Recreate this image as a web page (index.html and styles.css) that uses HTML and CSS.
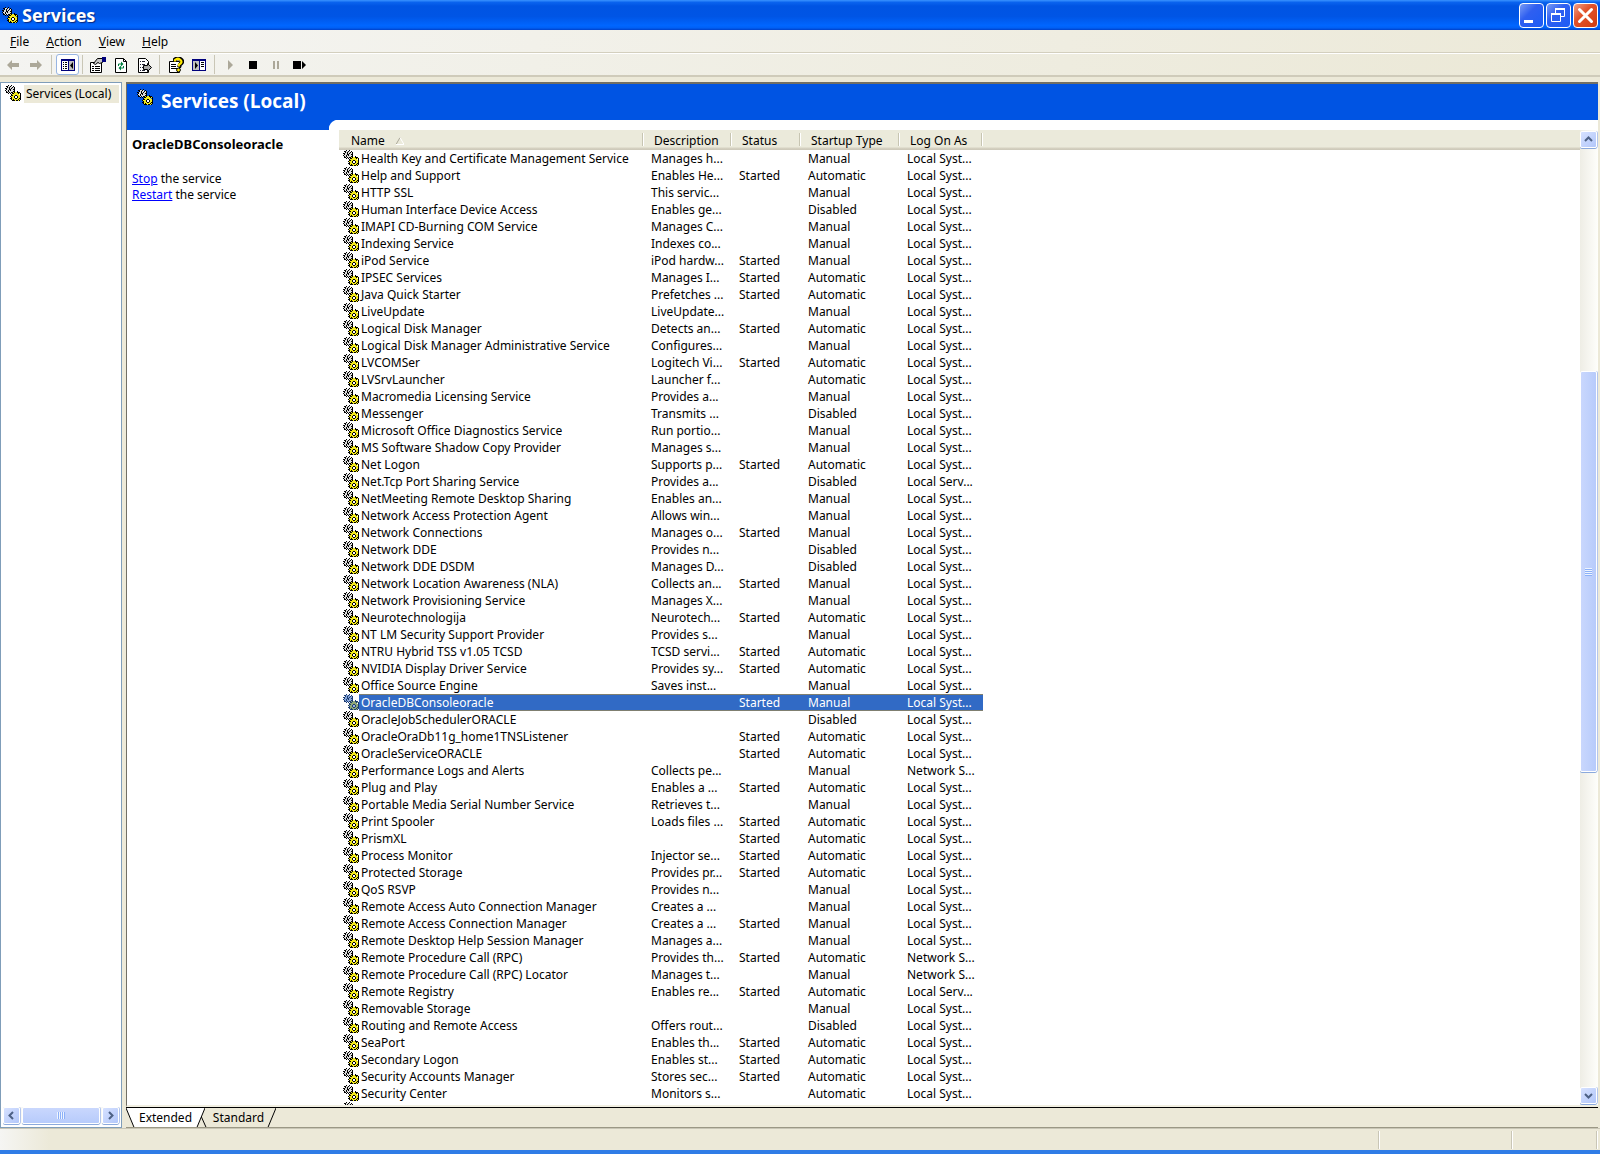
FILE: index.html
```
<!DOCTYPE html>
<html lang="en">
<head>
    <meta charset="UTF-8">
    <meta name="viewport" content="width=device-width, initial-scale=1.0">
    <title>Services</title>
    <link rel="stylesheet" href="styles.css">
</head>
<body>
    <svg class="defs" aria-hidden="true">
        <symbol id="gears" viewBox="0 0 16 16">
            <path class="gear-back" d="M3 1.5h4M2 2.5h8M2 3.5h8M1 4.5h9M1 5.5h9M1 6.5h7M3 7.5h3"/>
            <path class="gear-front" d="M8 7.5h4M7 8.5h9M7 9.5h7M8 10.5h7M6 11.5h9M7 12.5h8M7 13.5h7M7 14.5h8M10 15.5h4"/>
            <path class="gear-hole" d="M10 11.5h2M10 12.5h2"/>
            <path class="gear-line" d="M3 .5h1m2 0h1M1 1.5h2m2 0h1m2 0h1M2 2.5h1m1 0h1m2 0h1m1 0h1M0 3.5h2m2 0h1m1 0h1m2 0h1M1 4.5h1m2 0h2m2 0h2M0 5.5h1m2 0h1m1 0h1m3 0h1M1 6.5h1m1 0h1m4 0h2m2 0h1M1 7.5h2m1 0h1m1 0h2m1 0h1m2 0h3M3 8.5h1m1 0h1m1 0h2m4 0h1m1 0h1M6 9.5h1m8 0h1M6 10.5h2m2 0h2m3 0h1M5 11.5h1m3 0h1m2 0h1m2 0h1M6 12.5h1m2 0h1m2 0h1m2 0h1M5 13.5h2m3 0h2m2 0h2M6 14.5h1m1 0h1m4 0h1m1 0h1M7 15.5h3m1 0h2m1 0h1"/>
        </symbol>
    </svg>

    <header class="titlebar">
        <svg class="icon"><use href="#gears"/></svg>
        <h1>Services</h1>
        <div class="window-buttons">
            <button type="button" aria-label="Minimize">
                <svg viewBox="0 0 21 21"><path d="M3 15h9v3H3z" fill="#fff"/></svg>
            </button>
            <button type="button" aria-label="Restore">
                <svg viewBox="0 0 21 21" fill="none" stroke="#fff"><path d="M7.5 8V4.5h9v7H13"/><path d="M7 4h10" stroke-width="2"/><path d="M3.5 9.500h9v7h-9z"/><path d="M3 9h10" stroke-width="2"/></svg>
            </button>
            <button type="button" class="close" aria-label="Close">
                <svg viewBox="0 0 21 21"><path d="M4.500 4.500l12 12M16.500 4.500l-12 12" stroke="#fff" stroke-width="3" stroke-linecap="round"/></svg>
            </button>
        </div>
    </header>

    <nav class="menubar">
        <a href="#"><u>F</u>ile</a>
        <a href="#"><u>A</u>ction</a>
        <a href="#"><u>V</u>iew</a>
        <a href="#"><u>H</u>elp</a>
    </nav>

    <div class="toolbar">
        <button type="button" aria-label="Back"><svg viewBox="0 0 16 16"><path d="M2 8l5-5v3h7v4H7v3z" fill="#aca899"/></svg></button>
        <button type="button" aria-label="Forward"><svg viewBox="0 0 16 16"><path d="M14 8L9 3v3H2v4h7v3z" fill="#aca899"/></svg></button>
        <span class="divider"></span>
        <button type="button" class="pressed" aria-label="Show/Hide Console Tree"><svg viewBox="0 0 16 16"><path d="M1 2h14v12H1z" fill="#00007b"/><path d="M2 4h6v9H2z" fill="#fff"/><path d="M9 4h5v9H9z" fill="#c0c0c0"/><path d="M3 5.500h1m1 0h2M3 7.500h1m1 0h2M3 9.500h1m1 0h2M3 11.500h1m1 0h2" stroke="#000"/><path d="M13 5v7L10 8.500z"/></svg></button>
        <span class="divider"></span>
        <button type="button" aria-label="Properties"><svg viewBox="0 0 16 16"><path d="M.5 5.500h11v10H.5z" fill="#fff" stroke="#000"/><path d="M2 9.500h2m1 0h5M2 11.500h2m1 0h5M2 13.500h2m1 0h5" stroke="#000"/><path d="M3.500 6.500l4-5h5v4l-3 1-1.500-1-2.500 2z" fill="#c8c8c8" stroke="#000"/><path d="M12 0h4v5h-4z" fill="#00007b"/></svg></button>
        <button type="button" aria-label="Refresh"><svg viewBox="0 0 16 16"><path d="M2.500 1.500h8l3 3v11h-11z" fill="#fff" stroke="#000"/><path d="M10.500 1.500v3h3" fill="none" stroke="#000"/><path d="M8 4.500v5L10.500 7zM8 8.500v5L5.500 11z" fill="#008040"/><path d="M5.500 9V7H8M10.500 9v2H8" fill="none" stroke="#008040"/></svg></button>
        <button type="button" aria-label="Export List"><svg viewBox="0 0 16 16"><path d="M2.500 1.500h7l3 3v11h-10z" fill="#fff" stroke="#000"/><path d="M4 4.500h1m1 0h3M4 7.500h1m1 0h3M4 10.500h1m1 0h3M4 13.500h1m1 0h3" stroke="#223"/><path d="M7.500 8.500h4v-2l4 4-4 4v-2h-4z" fill="#aaa" stroke="#000"/></svg></button>
        <span class="divider"></span>
        <button type="button" aria-label="Help"><svg viewBox="0 0 16 16"><path d="M1.500 4.500h10v11h-10z" fill="#fff" stroke="#000"/><path d="M3 7.500h5M3 9.500h5M3 11.500h6" stroke="#000"/><path d="M7 5V2.500q3-2.500 6 0t-1 5l-1 3" fill="none" stroke="#000" stroke-width="4"/><path d="M7 4.500V3q3-2.500 5.500 0T11 7.500v2" fill="none" stroke="#ffeb00" stroke-width="2.200"/><circle cx="10.500" cy="13" r="1.900" fill="#ffeb00" stroke="#000"/></svg></button>
        <button type="button" aria-label="Show/Hide Action Pane"><svg viewBox="0 0 16 16"><path d="M1 2h14v12H1z" fill="#00007b"/><path d="M2 4h6v9H2z" fill="#c0c0c0"/><path d="M9 4h5v9H9z" fill="#fff"/><path d="M10 5.500h3M10 7.500h3M10 9.500h3" stroke="#000"/><path d="M4 5v7l3-3.500z"/></svg></button>
        <span class="divider"></span>
        <button type="button" aria-label="Start Service"><svg viewBox="0 0 16 16"><path d="M5 3v10l5-5z" fill="#aca899"/></svg></button>
        <button type="button" aria-label="Stop Service"><svg viewBox="0 0 16 16"><path d="M3 4h8v8H3z"/></svg></button>
        <button type="button" aria-label="Pause Service"><svg viewBox="0 0 16 16"><path d="M4 4h2v8H4zM8 4h2v8H8z" fill="#aca899"/></svg></button>
        <button type="button" aria-label="Restart Service"><svg viewBox="0 0 16 16"><path d="M1 4h8v8H1zM10 4v8l4-4z"/></svg></button>
    </div>

    <main>
        <aside class="tree">
            <a class="tree-item" href="#"><svg class="icon"><use href="#gears"/></svg><span>Services (Local)</span></a>
            <div class="scrollbar horizontal">
                <button type="button" aria-label="Scroll left"><svg viewBox="0 0 9 9"><path d="M6 1L2.500 4.500 6 8"/></svg></button>
                <div class="thumb"><i></i></div>
                <button type="button" aria-label="Scroll right"><svg viewBox="0 0 9 9"><path d="M3 1l3.500 3.500L3 8"/></svg></button>
            </div>
        </aside>

        <section class="content">
            <div class="pane">
                <div class="banner">
                    <svg class="icon"><use href="#gears"/></svg>
                    <h2>Services (Local)</h2>
                </div>
                <div class="details">
                    <h3>OracleDBConsoleoracle</h3>
                    <p><a href="#">Stop</a> the service</p>
                    <p><a href="#">Restart</a> the service</p>
                </div>
                <div class="list">
                    <div class="list-view">
                        <table>
                            <colgroup>
                                <col class="col-name">
                                <col class="col-description">
                                <col class="col-status">
                                <col class="col-startup">
                                <col class="col-logon">
                                <col>
                            </colgroup>
                            <thead>
                                <tr>
                                    <th>Name <svg class="sort" viewBox="0 0 8 8"><path d="M0 7.500L4 .5" stroke="#aca899"/><path d="M4 .5l4 7H0" stroke="#fff" fill="none"/></svg></th>
                                    <th>Description</th>
                                    <th>Status</th>
                                    <th>Startup Type</th>
                                    <th>Log On As</th>
                                    <td></td>
                                </tr>
                            </thead>
                            <tbody id="services"></tbody>
                        </table>
                    </div>
                    <div class="scrollbar vertical">
                        <button type="button" aria-label="Scroll up"><svg viewBox="0 0 9 9"><path d="M1 6l3.500-3.500L8 6"/></svg></button>
                        <div class="before"></div>
                        <div class="thumb"><i></i></div>
                        <div class="after"></div>
                        <button type="button" aria-label="Scroll down"><svg viewBox="0 0 9 9"><path d="M1 3l3.500 3.500L8 3"/></svg></button>
                    </div>
                </div>
            </div>
            <div class="tabs">
                <button type="button" class="tab"><svg viewBox="0 0 80 20" preserveAspectRatio="none"><path d="M0 0l8 19h64l8-19" fill="#fff"/><path d="M0 0l8 19M72 19l8-19" stroke="#000"/></svg><span>Extended</span></button>
                <button type="button" class="tab"><svg viewBox="0 0 76 20" preserveAspectRatio="none"><path d="M0 8l5 11M68 19l8-19" stroke="#000"/></svg><span>Standard</span></button>
            </div>
        </section>
    </main>

    <footer class="statusbar">
        <span></span>
        <span></span>
        <span></span>
    </footer>

    <script src="script.js"></script>
</body>
</html>
```
FILE: styles.css
```
* {
    box-sizing: border-box;
}
body {
    margin: 0;
    height: 100vh;
    display: flex;
    flex-direction: column;
    overflow: hidden;
    background-color: #ece9d8;
    border-bottom: 4px solid #2f7ce6;
    color: #000;
    font-family: Tahoma, "Noto Sans", sans-serif;
    font-size: 12px;
    line-height: 16px;
}
h1, h2, h3, p {
    margin: 0;
}
button {
    font: inherit;
    color: inherit;
    padding: 0;
    border: none;
    background: none;
}
.defs {
    position: absolute;
    width: 0;
    height: 0;
}
.icon {
    width: 16px;
    height: 16px;
    flex: none;
}
.gear-back {
    stroke: var(--gear-back, #dcdcdc);
}
.gear-front {
    stroke: var(--gear-front, #f2ea1c);
}
.gear-hole {
    stroke: var(--gear-hole, #fff);
}
.gear-line {
    stroke: var(--gear-line, #000);
}

/* title bar */
.titlebar {
    display: flex;
    align-items: center;
    height: 30px;
    flex: none;
    padding: 0 2px;
    background: linear-gradient(to bottom, #3a93ff 0%, #0a63ee 8%, #0054e3 20%, #0055e5 55%, #0066ff 85%, #0060f5 93%, #0040c8 100%);
    color: #fff;
}
.titlebar h1 {
    margin-left: 4px;
    font-family: "Trebuchet MS", "Open Sans", sans-serif;
    font-size: 18px;
    font-weight: 700;
    line-height: 30px;
    text-shadow: 1px 1px 1px #0a2a80;
}
.window-buttons {
    display: flex;
    gap: 2px;
    margin-left: auto;
}
.window-buttons button {
    width: 25px;
    height: 25px;
    border: 1px solid #fff;
    border-radius: 4px;
    background: linear-gradient(135deg, #7a9cf5 0%, #2f5ff0 40%, #1c5cf5 100%);
}
.window-buttons .close {
    background: linear-gradient(135deg, #f0a088 0%, #e2532c 40%, #d03c10 100%);
}
.window-buttons svg {
    display: block;
    width: 21px;
    height: 21px;
    margin: 1px;
}

/* menu and toolbar */
.menubar {
    display: flex;
    gap: 17px;
    height: 23px;
    flex: none;
    padding: 4px 10px;
    background: linear-gradient(to right, #f5f5f3, #ece9d8);
    border-bottom: 1px solid #d3cfbe;
}
.menubar a {
    color: #000;
    text-decoration: none;
}
.toolbar {
    display: flex;
    align-items: center;
    height: 24px;
    flex: none;
    padding-left: 1px;
    background: linear-gradient(to right, #f4f4f1, #ebe8d6);
    border-top: 1px solid #fff;
    border-bottom: 2px solid #cfcbba;
}
.toolbar button {
    display: flex;
    align-items: center;
    justify-content: center;
    width: 23px;
    height: 21px;
}
.toolbar svg {
    width: 16px;
    height: 16px;
}
.toolbar .pressed {
    border: 1px solid #98b5e2;
    border-radius: 3px;
    background-color: #fff;
}
.divider {
    width: 1px;
    height: 19px;
    margin: 0 4px;
    background-color: #c9c6b6;
}
.pressed + .divider {
    margin: 0 3px;
}

/* panes */
main {
    flex: 1;
    min-height: 0;
    display: flex;
    gap: 4px;
    padding: 5px 2px 0 0;
}
.tree {
    display: flex;
    flex-direction: column;
    justify-content: space-between;
    width: 122px;
    flex: none;
    padding: 2px;
    background-color: #fff;
    border: 1px solid #7f9db9;
}
.tree-item {
    display: flex;
    gap: 3px;
    padding-left: 2px;
    color: #000;
    line-height: 18px;
    text-decoration: none;
    white-space: nowrap;
}
.tree-item span {
    flex: 1;
    padding-left: 2px;
    background-color: #ece9d8;
}
.content {
    flex: 1;
    min-width: 0;
    display: flex;
    flex-direction: column;
}
.pane {
    flex: 1;
    min-height: 0;
    display: grid;
    grid-template-columns: 202px 1fr;
    grid-template-rows: 36px 1fr;
    background-color: #fff;
    border-top: 2px solid #716f64;
    border-left: 1px solid #716f64;
    border-bottom: 2px solid #f1efe2;
}
.banner {
    grid-column: 1 / 3;
    display: flex;
    gap: 8px;
    padding: 5px 10px;
    background-color: #0054e3;
    color: #fff;
}
.banner h2 {
    font-family: "Trebuchet MS", "Open Sans", sans-serif;
    font-size: 19px;
    font-weight: 700;
    line-height: 24px;
}
.details {
    padding: 6px 5px;
    border-top: 10px solid #0054e3;
}
.details h3 {
    margin-bottom: 19px;
    font-size: 13px;
}
.details a {
    color: #00f;
}
.list {
    min-width: 0;
    min-height: 0;
    display: flex;
    padding-top: 10px;
    background: radial-gradient(circle at 10px 10px, #fff 10px, #0054e3 11px) 0 0 / 10px 10px no-repeat;
}
.list-view {
    flex: 1;
    min-width: 0;
    margin-left: 10px;
    overflow: hidden;
}
table {
    width: 100%;
    table-layout: fixed;
    border-collapse: collapse;
}
.col-name {
    width: 305px;
}
.col-description {
    width: 88px;
}
.col-status {
    width: 69px;
}
.col-startup {
    width: 99px;
}
.col-logon {
    width: 83px;
}
thead tr {
    height: 20px;
    background: linear-gradient(to bottom, #ebeadb 17px, #d6d2c2 18px, #cbc7b8 20px);
}
th {
    padding: 2px 0 0 10px;
    font-weight: normal;
    text-align: left;
    background: linear-gradient(to right, #c7c5b2 1px, #fff 1px) right top 3px / 2px 13px no-repeat;
}
th:first-child {
    padding-left: 12px;
}
.sort {
    width: 8px;
    height: 8px;
    margin-left: 8px;
}
tbody tr {
    height: 17px;
}
tbody td {
    padding: 0 0 0 7px;
    line-height: 17px;
    white-space: nowrap;
}
tbody td:first-child {
    display: flex;
    padding-left: 4px;
}
.name {
    flex: 1;
    padding-left: 2px;
}
.selected td:not(:first-child):not(:last-child),
.selected .name {
    background-color: #316ac5;
    color: #fff;
    box-shadow: inset 0 1px #7f7f70, inset 0 -1px #7f7f70;
}
.selected .icon {
    --gear-back: #86a6dc;
    --gear-front: #8fa878;
    --gear-hole: #98b4e2;
    --gear-line: #1c3c70;
}

/* scroll bars */
.scrollbar {
    display: flex;
    background-color: #f8f8f4;
}
.scrollbar button,
.thumb {
    display: flex;
    align-items: center;
    justify-content: center;
    border: 1px solid #fff;
    border-radius: 2px;
    box-shadow: 0 1px #8ba9dc, 1px 0 #b4c6ec;
}
.scrollbar button {
    width: 17px;
    height: 17px;
    flex: none;
    background: linear-gradient(135deg, #d6e1ff, #b2c7fa);
}
.scrollbar svg {
    width: 9px;
    height: 9px;
    fill: none;
    stroke: #4d6185;
    stroke-width: 2;
}
.horizontal {
    gap: 2px;
    margin-bottom: 1px;
}
.horizontal .thumb {
    flex: 1;
    background: linear-gradient(to bottom, #c9d7fd, #b7cbfb);
}
.horizontal i {
    width: 8px;
    height: 7px;
    background: repeating-linear-gradient(to right, #eef4fe 0 1px, #8cb0f8 1px 2px);
}
.vertical {
    flex-direction: column;
    width: 18px;
    padding: 1px 1px 1px 0;
    background: linear-gradient(to right, #eeede5, #fefefb);
}
.vertical .before {
    flex: 223;
}
.vertical .thumb {
    flex: 399;
    background: linear-gradient(to right, #c9d7fd, #b7cbfb);
}
.vertical .after {
    flex: 315;
}
.vertical i {
    width: 7px;
    height: 8px;
    background: repeating-linear-gradient(to bottom, #eef4fe 0 1px, #8cb0f8 1px 2px);
}

/* view tabs */
.tabs {
    display: flex;
    height: 21px;
    flex: none;
    border-top: 1px solid #000;
    border-bottom: 1px solid #9b9885;
}
.tab {
    display: grid;
    width: 79px;
    height: 20px;
}
.tab svg,
.tab span {
    grid-area: 1 / 1;
}
.tab svg {
    width: 100%;
    height: 20px;
    fill: none;
}
.tab span {
    z-index: 1;
    line-height: 20px;
}
.tab + .tab {
    width: 75px;
    margin-left: -4px;
}

/* status bar */
.statusbar {
    display: flex;
    height: 22px;
    flex: none;
    padding: 2px 2px 1px 0;
    border-top: 1px solid #c9c6b6;
    background: linear-gradient(to right, #f5f5f3, #ece9d8 50px);
}
.statusbar span {
    width: 133px;
    border-right: 1px solid #fff;
    box-shadow: inset -1px 0 #c9c6b6;
}
.statusbar span:first-child {
    flex: 1;
}
.statusbar span:last-child {
    width: 85px;
}
```
FILE: script.js
```
// name, description, status, startup type, log on as
const services = [
    ['Health Key and Certificate Management Service', 'Manages h...', '', 'Manual', 'Local Syst...'],
    ['Help and Support', 'Enables He...', 'Started', 'Automatic', 'Local Syst...'],
    ['HTTP SSL', 'This servic...', '', 'Manual', 'Local Syst...'],
    ['Human Interface Device Access', 'Enables ge...', '', 'Disabled', 'Local Syst...'],
    ['IMAPI CD-Burning COM Service', 'Manages C...', '', 'Manual', 'Local Syst...'],
    ['Indexing Service', 'Indexes co...', '', 'Manual', 'Local Syst...'],
    ['iPod Service', 'iPod hardw...', 'Started', 'Manual', 'Local Syst...'],
    ['IPSEC Services', 'Manages I...', 'Started', 'Automatic', 'Local Syst...'],
    ['Java Quick Starter', 'Prefetches ...', 'Started', 'Automatic', 'Local Syst...'],
    ['LiveUpdate', 'LiveUpdate...', '', 'Manual', 'Local Syst...'],
    ['Logical Disk Manager', 'Detects an...', 'Started', 'Automatic', 'Local Syst...'],
    ['Logical Disk Manager Administrative Service', 'Configures...', '', 'Manual', 'Local Syst...'],
    ['LVCOMSer', 'Logitech Vi...', 'Started', 'Automatic', 'Local Syst...'],
    ['LVSrvLauncher', 'Launcher f...', '', 'Automatic', 'Local Syst...'],
    ['Macromedia Licensing Service', 'Provides a...', '', 'Manual', 'Local Syst...'],
    ['Messenger', 'Transmits ...', '', 'Disabled', 'Local Syst...'],
    ['Microsoft Office Diagnostics Service', 'Run portio...', '', 'Manual', 'Local Syst...'],
    ['MS Software Shadow Copy Provider', 'Manages s...', '', 'Manual', 'Local Syst...'],
    ['Net Logon', 'Supports p...', 'Started', 'Automatic', 'Local Syst...'],
    ['Net.Tcp Port Sharing Service', 'Provides a...', '', 'Disabled', 'Local Serv...'],
    ['NetMeeting Remote Desktop Sharing', 'Enables an...', '', 'Manual', 'Local Syst...'],
    ['Network Access Protection Agent', 'Allows win...', '', 'Manual', 'Local Syst...'],
    ['Network Connections', 'Manages o...', 'Started', 'Manual', 'Local Syst...'],
    ['Network DDE', 'Provides n...', '', 'Disabled', 'Local Syst...'],
    ['Network DDE DSDM', 'Manages D...', '', 'Disabled', 'Local Syst...'],
    ['Network Location Awareness (NLA)', 'Collects an...', 'Started', 'Manual', 'Local Syst...'],
    ['Network Provisioning Service', 'Manages X...', '', 'Manual', 'Local Syst...'],
    ['Neurotechnologija', 'Neurotech...', 'Started', 'Automatic', 'Local Syst...'],
    ['NT LM Security Support Provider', 'Provides s...', '', 'Manual', 'Local Syst...'],
    ['NTRU Hybrid TSS v1.05 TCSD', 'TCSD servi...', 'Started', 'Automatic', 'Local Syst...'],
    ['NVIDIA Display Driver Service', 'Provides sy...', 'Started', 'Automatic', 'Local Syst...'],
    ['Office Source Engine', 'Saves inst...', '', 'Manual', 'Local Syst...'],
    ['OracleDBConsoleoracle', '', 'Started', 'Manual', 'Local Syst...'],
    ['OracleJobSchedulerORACLE', '', '', 'Disabled', 'Local Syst...'],
    ['OracleOraDb11g_home1TNSListener', '', 'Started', 'Automatic', 'Local Syst...'],
    ['OracleServiceORACLE', '', 'Started', 'Automatic', 'Local Syst...'],
    ['Performance Logs and Alerts', 'Collects pe...', '', 'Manual', 'Network S...'],
    ['Plug and Play', 'Enables a ...', 'Started', 'Automatic', 'Local Syst...'],
    ['Portable Media Serial Number Service', 'Retrieves t...', '', 'Manual', 'Local Syst...'],
    ['Print Spooler', 'Loads files ...', 'Started', 'Automatic', 'Local Syst...'],
    ['PrismXL', '', 'Started', 'Automatic', 'Local Syst...'],
    ['Process Monitor', 'Injector se...', 'Started', 'Automatic', 'Local Syst...'],
    ['Protected Storage', 'Provides pr...', 'Started', 'Automatic', 'Local Syst...'],
    ['QoS RSVP', 'Provides n...', '', 'Manual', 'Local Syst...'],
    ['Remote Access Auto Connection Manager', 'Creates a ...', '', 'Manual', 'Local Syst...'],
    ['Remote Access Connection Manager', 'Creates a ...', 'Started', 'Manual', 'Local Syst...'],
    ['Remote Desktop Help Session Manager', 'Manages a...', '', 'Manual', 'Local Syst...'],
    ['Remote Procedure Call (RPC)', 'Provides th...', 'Started', 'Automatic', 'Network S...'],
    ['Remote Procedure Call (RPC) Locator', 'Manages t...', '', 'Manual', 'Network S...'],
    ['Remote Registry', 'Enables re...', 'Started', 'Automatic', 'Local Serv...'],
    ['Removable Storage', '', '', 'Manual', 'Local Syst...'],
    ['Routing and Remote Access', 'Offers rout...', '', 'Disabled', 'Local Syst...'],
    ['SeaPort', 'Enables th...', 'Started', 'Automatic', 'Local Syst...'],
    ['Secondary Logon', 'Enables st...', 'Started', 'Automatic', 'Local Syst...'],
    ['Security Accounts Manager', 'Stores sec...', 'Started', 'Automatic', 'Local Syst...'],
    ['Security Center', 'Monitors s...', '', 'Automatic', 'Local Syst...'],
    ['', '', '', '', '']
];
const selected = 'OracleDBConsoleoracle';

document.getElementById('services').innerHTML = services.map(([name, ...cells]) => `
    <tr class="${name === selected ? 'selected' : ''}">
        <td><svg class="icon"><use href="#gears"/></svg><span class="name">${name}</span></td>
        ${cells.map(cell => `<td>${cell}</td>`).join('')}
        <td></td>
    </tr>`).join('');
```
